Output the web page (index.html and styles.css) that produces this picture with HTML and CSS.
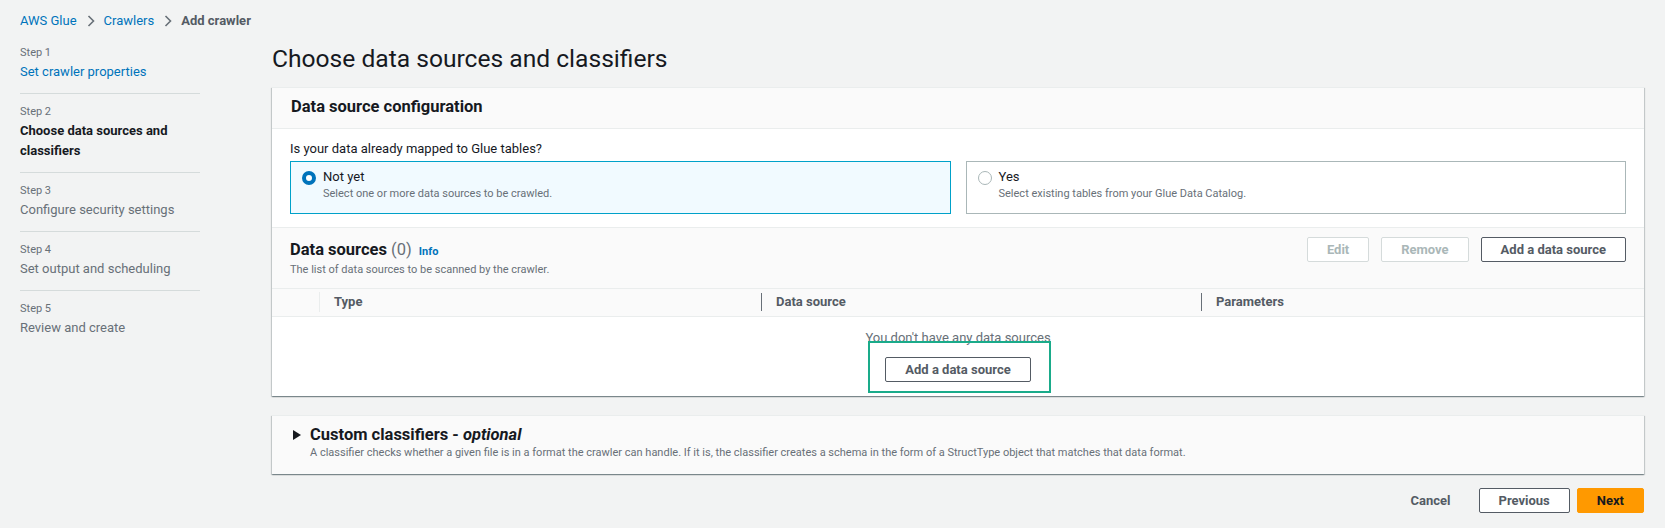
FILE: index.html
```html
<!DOCTYPE html>
<html lang="en">
<head>
<meta charset="utf-8">
<title>Add crawler</title>
<link rel="stylesheet" href="styles.css">
</head>
<body>
<nav class="crumbs">
  <a class="crumb-link">AWS Glue</a>
  <svg class="chev" width="8" height="12" viewBox="0 0 8 12"><polyline points="1.5,1 6.5,6 1.5,11" fill="none" stroke="#687078" stroke-width="1.6"/></svg>
  <a class="crumb-link">Crawlers</a>
  <svg class="chev" width="8" height="12" viewBox="0 0 8 12"><polyline points="1.5,1 6.5,6 1.5,11" fill="none" stroke="#687078" stroke-width="1.6"/></svg>
  <span class="crumb-current">Add crawler</span>
</nav>
<div class="layout">
  <aside class="steps">
    <div class="step">
      <div class="step-label">Step 1</div>
      <a class="step-title link">Set crawler properties</a>
    </div>
    <div class="step">
      <div class="step-label">Step 2</div>
      <div class="step-title active">Choose data sources and classifiers</div>
    </div>
    <div class="step">
      <div class="step-label">Step 3</div>
      <div class="step-title">Configure security settings</div>
    </div>
    <div class="step">
      <div class="step-label">Step 4</div>
      <div class="step-title">Set output and scheduling</div>
    </div>
    <div class="step last">
      <div class="step-label">Step 5</div>
      <div class="step-title">Review and create</div>
    </div>
  </aside>
  <main class="content">
    <h1 class="page-title">Choose data sources and classifiers</h1>
    <section class="card">
      <header class="card-header">
        <h2 class="h2">Data source configuration</h2>
      </header>
      <div class="card-body">
        <div class="question">Is your data already mapped to Glue tables?</div>
        <div class="tiles">
          <div class="tile selected">
            <span class="radio checked"></span>
            <span class="tile-text">
              <span class="tile-title">Not yet</span>
              <span class="tile-desc">Select one or more data sources to be crawled.</span>
            </span>
          </div>
          <div class="tile">
            <span class="radio"></span>
            <span class="tile-text">
              <span class="tile-title">Yes</span>
              <span class="tile-desc">Select existing tables from your Glue Data Catalog.</span>
            </span>
          </div>
        </div>
      </div>
      <div class="table-bar">
        <div class="table-bar-text">
          <h2 class="h2">Data sources <span class="count">(0)</span> <a class="info">Info</a></h2>
          <p class="table-desc">The list of data sources to be scanned by the crawler.</p>
        </div>
        <div class="actions">
          <button class="btn disabled">Edit</button>
          <button class="btn disabled">Remove</button>
          <button class="btn">Add a data source</button>
        </div>
      </div>
      <div class="table-head">
        <div class="th th-select"></div>
        <div class="th"><span class="sep light"></span>Type</div>
        <div class="th"><span class="sep"></span>Data source</div>
        <div class="th"><span class="sep"></span>Parameters</div>
      </div>
      <div class="empty">
        <div class="empty-text">You don't have any data sources</div>
        <div class="empty-action">
          <button class="btn">Add a data source</button>
          <span class="highlight"></span>
        </div>
      </div>
    </section>
    <section class="card expander">
      <div class="exp-title">
        <svg class="caret" width="8" height="10" viewBox="0 0 8 10"><polygon points="0,0 8,5 0,10" fill="#16191f"/></svg>
        <h2 class="h2">Custom classifiers - <em>optional</em></h2>
      </div>
      <p class="exp-desc">A classifier checks whether a given file is in a format the crawler can handle. If it is, the classifier creates a schema in the form of a StructType object that matches that data format.</p>
    </section>
    <div class="footer">
      <button class="btn link-btn">Cancel</button>
      <button class="btn">Previous</button>
      <button class="btn primary">Next</button>
    </div>
  </main>
</div>
</body>
</html>
```

FILE: styles.css
```css
* { box-sizing: border-box; }
html, body { margin: 0; padding: 0; }
body {
  background: #f2f3f3;
  font-family: Roboto, "Liberation Sans", Arial, sans-serif;
  font-size: 13px;
  color: #16191f;
  width: 1665px;
  height: 528px;
  overflow: hidden;
}
a { text-decoration: none; cursor: pointer; }
p, h1, h2 { margin: 0; }

.crumbs {
  display: flex;
  align-items: center;
  padding: 11px 0 0 20px;
  height: 31px;
  line-height: 20px;
}
.crumb-link { color: #0073bb; }
.chev { margin: 0 9px 0 10px; }
.crumb-current { color: #545b64; font-weight: 700; }

.layout {
  display: grid;
  grid-template-columns: 180px 1372px;
  column-gap: 72px;
  padding: 0 21px 0 20px;
}

.steps { padding-top: 14px; }
.step {
  padding: 0 0 11px;
  border-bottom: 1px solid #d5dbdb;
  margin-bottom: 10px;
}
.step.last { border-bottom: 0; }
.step-label {
  font-size: 11px;
  line-height: 16px;
  color: #687078;
}
.step-title {
  display: block;
  line-height: 20px;
  color: #687078;
  margin-top: 1px;
}
.step-title.link { color: #0073bb; }
.step-title.active { color: #16191f; font-weight: 700; }

.page-title {
  font-size: 24.6px;
  font-weight: 400;
  line-height: 32px;
  margin: 12px 0 12px;
  color: #16191f;
}

.card {
  background: #fff;
  border-top: 1px solid #eaeded;
  box-shadow: 0 1px 1px 0 rgba(0,28,36,.3), 1px 1px 1px 0 rgba(0,28,36,.15), -1px 1px 1px 0 rgba(0,28,36,.15);
}
.h2 {
  font-size: 16.5px;
  font-weight: 700;
  line-height: 20px;
  color: #16191f;
}
.card-header {
  background: #fafafa;
  padding: 9px 19px 11px;
  border-bottom: 1px solid #eaeded;
}
.card-body {
  padding: 10px 18px 13px;
  border-bottom: 1px solid #eaeded;
}
.question { line-height: 20px; }
.tiles {
  display: grid;
  grid-template-columns: 1fr 1fr;
  column-gap: 15px;
  margin-top: 2px;
}
.tile {
  display: flex;
  align-items: flex-start;
  border: 1px solid #aab7b8;
  padding: 6px 12px 10px 11px;
  height: 53px;
}
.tile.selected {
  border-color: #00a1c9;
  background: #f1faff;
}
.radio {
  width: 14px;
  height: 14px;
  border-radius: 50%;
  border: 1px solid #aab7b8;
  background: #fff;
  margin-top: 3px;
  flex: none;
}
.radio.checked { border: 4px solid #0073bb; }
.tile-text {
  display: flex;
  flex-direction: column;
  margin-left: 7px;
}
.tile-title { line-height: 18px; }
.tile-desc { font-size: 11px; line-height: 16px; color: #687078; }

.table-bar {
  display: flex;
  justify-content: space-between;
  align-items: flex-start;
  background: #fafafa;
  padding: 12px 18px 11px 18px;
  border-bottom: 1px solid #eaeded;
}
.count { font-weight: 400; color: #687078; }
.info { font-size: 11px; font-weight: 700; color: #0073bb; margin-left: 3px; }
.table-desc { font-size: 11px; line-height: 15px; color: #687078; }
.actions { display: flex; gap: 12px; margin-top: -3px; }

.btn {
  font-family: inherit;
  font-size: 13px;
  font-weight: 700;
  color: #545b64;
  background: #fff;
  border: 1px solid #545b64;
  border-radius: 2px;
  height: 25px;
  padding: 0 19px;
  line-height: 23px;
  cursor: pointer;
}
.btn.disabled {
  color: #aab7b8;
  border-color: #d5dbdb;
}
.btn.primary {
  background: #ff9900;
  border-color: #ff9900;
  color: #16191f;
}
.btn.link-btn {
  border-color: transparent;
  background: transparent;
  color: #545b64;
  padding: 0 8px;
}

.table-head {
  display: grid;
  grid-template-columns: 47px 442px 440px 1fr;
  height: 28px;
  padding-bottom: 2px;
  background: #fafafa;
  border-bottom: 1px solid #eaeded;
  align-items: center;
}
.th {
  position: relative;
  font-weight: 700;
  color: #545b64;
  line-height: 18px;
  padding-left: 15px;
  display: flex;
  align-items: center;
}
.sep {
  position: absolute;
  left: 0;
  top: 0;
  width: 1px;
  height: 18px;
  background: #687078;
}
.sep.light { background: #eaeded; height: 20px; top: -1px; }

.empty {
  display: flex;
  flex-direction: column;
  align-items: center;
  padding: 11px 0 14px;
}
.empty-text { color: #687078; line-height: 20px; }
.empty-action { position: relative; margin-top: 9px; }
.highlight {
  position: absolute;
  left: -17px;
  top: -16px;
  width: 183px;
  height: 52px;
  border: 2px solid #1aab8a;
  pointer-events: none;
}

.expander {
  margin-top: 19px;
  background: #fafafa;
  padding: 9px 19px 13px;
}
.exp-title { display: flex; align-items: center; }
.caret { margin: 0 9px 0 2px; }
.exp-title .h2 { line-height: 20px; }
.exp-title em { font-style: italic; }
.exp-desc {
  font-size: 11px;
  line-height: 16px;
  color: #687078;
  margin-left: 19px;
}

.footer {
  display: flex;
  justify-content: flex-end;
  align-items: center;
  margin-top: 14px;
  gap: 7px;
}
.footer .link-btn { margin-right: 12px; }
```
